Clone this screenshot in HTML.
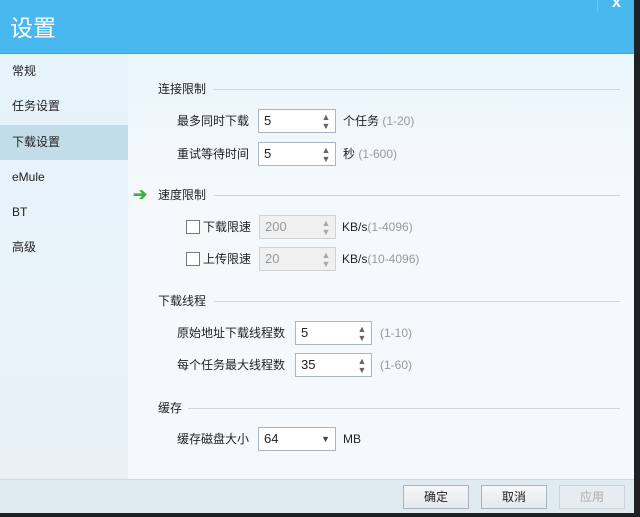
<!DOCTYPE html>
<html><head><meta charset="utf-8"><style>
*{margin:0;padding:0;box-sizing:border-box}
body{width:640px;height:517px;position:relative;overflow:hidden;background:#1e2226;font-family:"Liberation Sans","Noto Sans CJK SC",sans-serif;font-size:12px;color:#222}
.a{position:absolute}
#win{left:0;top:0;width:634px;height:513px;background:#f3f9fd;overflow:hidden}
#title{left:0;top:0;width:634px;height:54px;background:#48b8ef;border-bottom:1px solid #3aa5dc}
#title span{position:absolute;left:10px;top:9px;font-size:23px;color:#fff}
#side{left:0;top:54px;width:128px;height:425px;background:linear-gradient(#e6f3fb,#e9f1f7)}
.it{position:absolute;left:0;width:128px;height:35px;line-height:35px;padding-left:12px;font-size:12px}
.sel{background:#c3dcea}
#content{left:128px;top:54px;width:506px;height:425px;background:linear-gradient(#e9f5fc,#f5f9fc 30%)}
.h{position:absolute;left:158px;font-size:12px;line-height:16px}
.ln{position:absolute;height:1px;background:#ccd6dd;right:14px}
.lab{position:absolute;text-align:right;line-height:16px}
.in{position:absolute;background:#fff;border:1px solid #aab6bf;height:24px;font-size:13px;padding-left:5px;line-height:22px}
.dis{background:#f0f0f0;border-color:#cdd3d7;color:#999}
.sp{position:absolute;right:4px;top:3px;width:10px;font-size:9px;line-height:9px;color:#666;text-align:center}
.dis .sp{color:#aaa}
.g{color:#999}
.cb{position:absolute;width:14px;height:14px;border:1px solid #777;background:#fff}
#foot{left:0;top:479px;width:634px;height:34px;background:#e0eaf1;border-top:1px solid #cfdae2}
.btn{position:absolute;top:485px;width:66px;height:24px;border:1px solid #aab4bc;background:linear-gradient(#f6f8fa,#e4e9ed);text-align:center;line-height:22px;font-size:12px}
</style></head><body>
<div id="win" class="a">
<div id="title" class="a"><span>设置</span>
<div class="a" style="left:597px;top:0;width:1px;height:12px;background:#6cc6f2"></div>
<div class="a" style="left:612px;top:-6px;color:#fff;font-size:16px;font-weight:bold">x</div></div>
<div id="side" class="a">
<div class="it" style="top:0">常规</div>
<div class="it" style="top:35px">任务设置</div>
<div class="it sel" style="top:71px">下载设置</div>
<div class="it" style="top:106px">eMule</div>
<div class="it" style="top:141px">BT</div>
<div class="it" style="top:176px">高级</div>
</div>
<div id="content" class="a"></div>

<div class="h" style="top:81px">连接限制</div><div class="ln" style="left:214px;top:89px"></div>
<div class="lab" style="right:385px;top:113px">最多同时下载</div>
<div class="in" style="left:258px;top:109px;width:78px">5<div class="sp">▲<br>▼</div></div>
<div class="lab" style="left:343px;top:113px">个任务 <span class="g">(1-20)</span></div>
<div class="lab" style="right:385px;top:146px">重试等待时间</div>
<div class="in" style="left:258px;top:142px;width:78px">5<div class="sp">▲<br>▼</div></div>
<div class="lab" style="left:343px;top:146px">秒 <span class="g">(1-600)</span></div>

<div class="a" style="left:133px;top:186px;color:#3fb23a;font-size:17px;font-weight:bold;line-height:18px">➔</div>
<div class="h" style="top:187px">速度限制</div><div class="ln" style="left:214px;top:195px"></div>
<div class="cb" style="left:186px;top:220px"></div>
<div class="lab" style="left:203px;top:219px">下载限速</div>
<div class="in dis" style="left:259px;top:215px;width:77px">200<div class="sp">▲<br>▼</div></div>
<div class="lab" style="left:342px;top:219px">KB/s<span class="g">(1-4096)</span></div>
<div class="cb" style="left:186px;top:252px"></div>
<div class="lab" style="left:203px;top:251px">上传限速</div>
<div class="in dis" style="left:259px;top:247px;width:77px">20<div class="sp">▲<br>▼</div></div>
<div class="lab" style="left:342px;top:251px">KB/s<span class="g">(10-4096)</span></div>

<div class="h" style="top:293px">下载线程</div><div class="ln" style="left:214px;top:301px"></div>
<div class="lab" style="right:349px;top:325px">原始地址下载线程数</div>
<div class="in" style="left:295px;top:321px;width:77px">5<div class="sp">▲<br>▼</div></div>
<div class="lab g" style="left:380px;top:325px">(1-10)</div>
<div class="lab" style="right:349px;top:357px">每个任务最大线程数</div>
<div class="in" style="left:295px;top:353px;width:77px">35<div class="sp">▲<br>▼</div></div>
<div class="lab g" style="left:380px;top:357px">(1-60)</div>

<div class="h" style="top:400px">缓存</div><div class="ln" style="left:188px;top:408px"></div>
<div class="lab" style="right:385px;top:431px">缓存磁盘大小</div>
<div class="in" style="left:258px;top:427px;width:78px">64<div class="a" style="right:5px;top:0;font-size:9px;color:#444">▼</div></div>
<div class="lab" style="left:343px;top:431px">MB</div>

<div id="foot" class="a"></div>
<div class="btn" style="left:403px">确定</div>
<div class="btn" style="left:481px">取消</div>
<div class="btn" style="left:559px;color:#aaa;border-color:#cdd5db;background:#e6edf2">应用</div>
</div>
</body></html>
